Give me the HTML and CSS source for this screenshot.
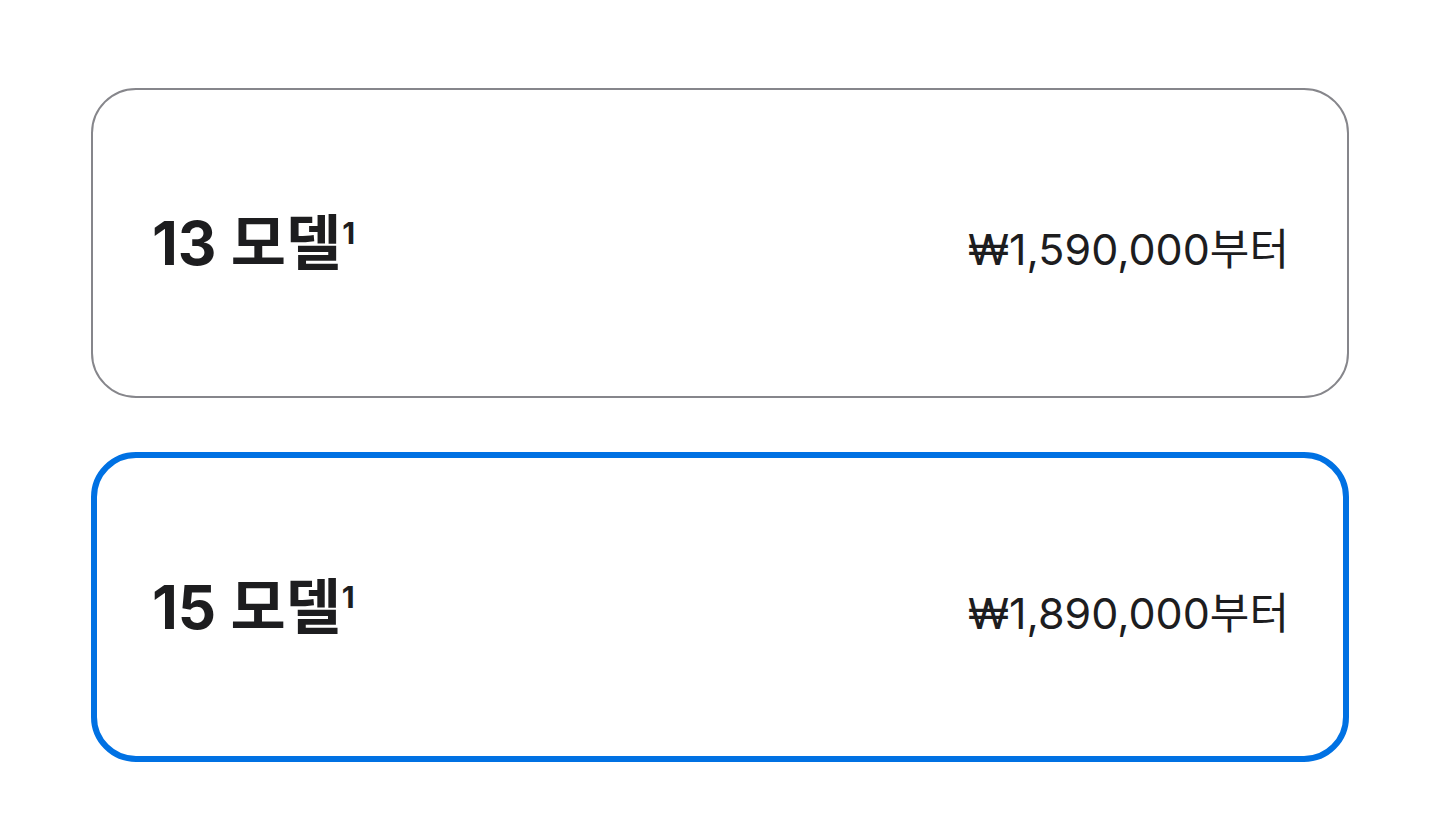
FILE: index.html
```html
<!DOCTYPE html>
<html lang="ko">
<head>
    <meta charset="UTF-8">
    <meta name="viewport" content="width=device-width, initial-scale=1.0">
    <title>모델 선택</title>
    <link rel="stylesheet" href="styles.css">
</head>
<body>
    <main class="models">
        <div class="model-card">
            <div class="model-row">
                <span class="model-name">13 모델<sup>1</sup></span>
                <span class="model-price">₩1,590,000부터</span>
            </div>
        </div>
        <div class="model-card selected">
            <div class="model-row">
                <span class="model-name">15 모델<sup>1</sup></span>
                <span class="model-price">₩1,890,000부터</span>
            </div>
        </div>
    </main>
</body>
</html>
```

FILE: styles.css
```css
body {
    margin: 0;
    background: #fff;
    color: #1d1d1f;
    font-family: "Inter", "Noto Sans CJK KR", sans-serif;
}

.models {
    display: flex;
    flex-direction: column;
    gap: 54px;
    padding: 88px 91px;
}

.model-card {
    box-sizing: border-box;
    height: 310px;
    border: 2px solid #86868b;
    border-radius: 45px;
    padding: 0 58px 0 59px;
    display: flex;
    flex-direction: column;
    justify-content: center;
}

.model-card.selected {
    border: 6px solid #0071e3;
    padding: 0 54px 0 55px;
}

.model-row {
    display: flex;
    justify-content: space-between;
    align-items: baseline;
}

.model-name {
    font-size: 60px;
    font-weight: 700;
    line-height: 1.2;
}

.model-name sup {
    font-size: 30px;
    font-weight: 700;
    line-height: 0;
    vertical-align: 21px;
    margin-left: 1px;
}

.model-price {
    font-size: 43px;
    font-weight: 400;
    line-height: 1.2;
}
```
